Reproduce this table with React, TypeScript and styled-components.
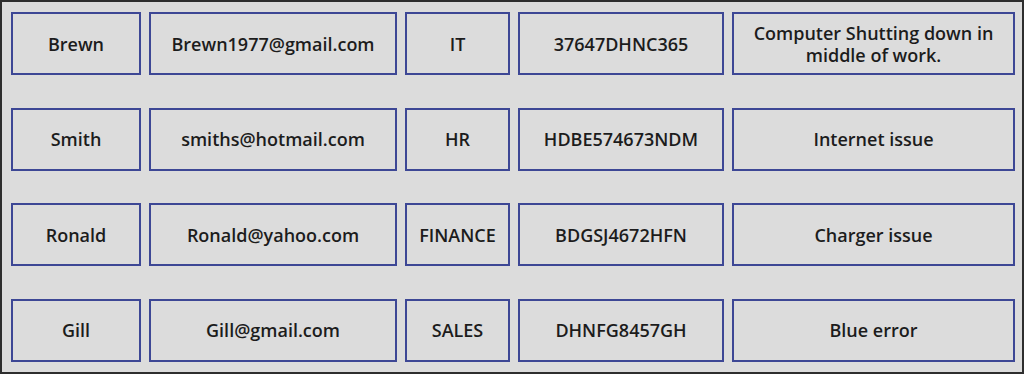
import React from "react";
import styled, { createGlobalStyle } from "styled-components";

const GlobalStyle = createGlobalStyle`
  html, body {
    margin: 0;
    padding: 0;
    background: #dcdcdc;
  }
  * {
    box-sizing: border-box;
  }
`;

interface Ticket {
  name: string;
  email: string;
  department: string;
  assetId: string;
  issue: string;
}

const tickets: Ticket[] = [
  {
    name: "Brewn",
    email: "Brewn1977@gmail.com",
    department: "IT",
    assetId: "37647DHNC365",
    issue: "Computer Shutting down in middle of work.",
  },
  {
    name: "Smith",
    email: "smiths@hotmail.com",
    department: "HR",
    assetId: "HDBE574673NDM",
    issue: "Internet issue",
  },
  {
    name: "Ronald",
    email: "Ronald@yahoo.com",
    department: "FINANCE",
    assetId: "BDGSJ4672HFN",
    issue: "Charger issue",
  },
  {
    name: "Gill",
    email: "Gill@gmail.com",
    department: "SALES",
    assetId: "DHNFG8457GH",
    issue: "Blue error",
  },
];

const Screen = styled.div`
  width: 1024px;
  height: 374px;
  border: 2px solid #2e2e2e;
  background: #dcdcdc;
  padding: 10px 9px 10px 9px;
  display: grid;
  grid-template-rows: repeat(4, 63px);
  align-content: space-between;
  font-family: "Open Sans", "Liberation Sans", sans-serif;
`;

const Row = styled.div`
  display: grid;
  grid-template-columns: 130px 248px 105px 206px 283px;
  column-gap: 8px;
`;

const Cell = styled.div`
  border: 2px solid #3d4795;
  background: #dcdcdc;
  display: flex;
  align-items: center;
  justify-content: center;
  text-align: center;
  padding: 0 10px;
  font-size: 18px;
  font-weight: 600;
  line-height: 22px;
  color: #1c1c1c;
`;

export default function App() {
  return (
    <>
      <GlobalStyle />
      <Screen>
        {tickets.map((t) => (
          <Row key={t.name}>
            <Cell>{t.name}</Cell>
            <Cell>{t.email}</Cell>
            <Cell>{t.department}</Cell>
            <Cell>{t.assetId}</Cell>
            <Cell>{t.issue}</Cell>
          </Row>
        ))}
      </Screen>
    </>
  );
}
